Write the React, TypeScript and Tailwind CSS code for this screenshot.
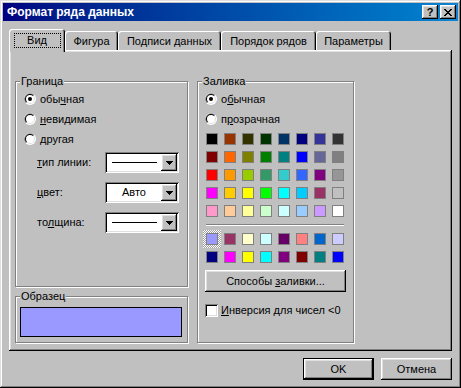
import React from 'react';

const RAISED =
  'shadow-[inset_-1px_-1px_0_#000,inset_1px_1px_0_#fff,inset_-2px_-2px_0_#808080,inset_2px_2px_0_#dfdfdf]';
const SUNKEN =
  'shadow-[inset_1px_1px_0_#808080,inset_-1px_-1px_0_#fff,inset_2px_2px_0_#000,inset_-2px_-2px_0_#dfdfdf]';

const PALETTE: string[][] = [
  ['#000000', '#993300', '#333300', '#003300', '#003366', '#000080', '#333399', '#333333'],
  ['#800000', '#ff6600', '#808000', '#008000', '#008080', '#0000ff', '#666699', '#808080'],
  ['#ff0000', '#ff9900', '#99cc00', '#339966', '#33cccc', '#3366ff', '#800080', '#969696'],
  ['#ff00ff', '#ffcc00', '#ffff00', '#00ff00', '#00ffff', '#00ccff', '#993366', '#c0c0c0'],
  ['#ff99cc', '#ffcc99', '#ffff99', '#ccffcc', '#ccffff', '#99ccff', '#cc99ff', '#ffffff'],
];

const EXTRA: string[][] = [
  ['#9999ff', '#993366', '#ffffcc', '#ccffff', '#660066', '#ff8080', '#0066cc', '#ccccff'],
  ['#000080', '#ff00ff', '#ffff00', '#00ffff', '#800080', '#800000', '#008080', '#0000ff'],
];

const Radio = ({ checked }: { checked?: boolean }) => (
  <svg width="12" height="12" viewBox="0 0 12 12" className="shrink-0">
    <circle cx="6" cy="6" r="6" fill="#fff" />
    <path d="M10.24 1.76 A6 6 0 0 0 1.76 10.24 Z" fill="#808080" />
    <circle cx="6" cy="6" r="5" fill="#dfdfdf" />
    <path d="M9.54 2.46 A5 5 0 0 0 2.46 9.54 Z" fill="#000" />
    <circle cx="6" cy="6" r="4" fill="#fff" />
    {checked && <circle cx="6" cy="6" r="2" fill="#000" />}
  </svg>
);

const RadioRow = ({ checked, children }: { checked?: boolean; children: React.ReactNode }) => (
  <div className="flex h-[12px] items-center gap-[4px]">
    <Radio checked={checked} />
    <span className="leading-[12px]">{children}</span>
  </div>
);

const Combo = ({ children }: { children: React.ReactNode }) => (
  <div className={`flex h-[21px] w-[74px] bg-white p-[2px] ${SUNKEN}`}>
    <div className="flex flex-1 items-center justify-center">{children}</div>
    <div className={`flex h-full w-[16px] items-center justify-center bg-[#c0c0c0] ${RAISED}`}>
      <svg width="7" height="4" viewBox="0 0 7 4" shapeRendering="crispEdges">
        <path d="M0 0h7v1h-1v1h-1v1h-1v1h-1v-1h-1v-1h-1v-1h-1z" fill="#000" />
      </svg>
    </div>
  </div>
);

const GroupBox = ({
  label,
  className,
  children,
}: {
  label: string;
  className: string;
  children?: React.ReactNode;
}) => (
  <div className={`relative border border-[#808080] shadow-[inset_1px_1px_0_#fff,1px_1px_0_#fff] ${className}`}>
    <span className="absolute -top-[7px] left-[4px] bg-[#c0c0c0] px-[1px] leading-[13px]">{label}</span>
    {children}
  </div>
);

const Swatch = ({ color, selected }: { color: string; selected?: boolean }) => (
  <div className="relative h-[12px] w-[12px]">
    {selected && (
      <div className="absolute -inset-[3px] bg-[repeating-conic-gradient(#fff_0_25%,#a0a0a0_0_50%)] bg-[length:2px_2px]" />
    )}
    <div className="relative h-full w-full border border-[#808080]" style={{ backgroundColor: color }} />
  </div>
);

const Tab = ({ label, width, active }: { label: string; width: string; active?: boolean }) =>
  active ? (
    <div
      className={`relative z-10 -mb-[2px] flex h-[23px] flex-col items-center rounded-t-[3px] bg-[#c0c0c0] pt-[4px] shadow-[inset_1px_1px_0_#fff,inset_-1px_0_0_#000,inset_-2px_0_0_#808080] ${width}`}
    >
      <span className="flex h-[15px] w-[47px] items-center justify-center border border-dotted border-black">
        {label}
      </span>
    </div>
  ) : (
    <div
      className={`flex h-[19px] items-center justify-center rounded-t-[3px] bg-[#c0c0c0] pt-[2px] shadow-[inset_1px_1px_0_#fff,inset_-1px_0_0_#000,inset_-2px_0_0_#808080] ${width}`}
    >
      {label}
    </div>
  );

const Button = ({ children, primary, className }: { children: React.ReactNode; primary?: boolean; className: string }) => (
  <div className={`${primary ? 'border border-black' : ''} ${className}`}>
    <div className={`flex h-full w-full items-center justify-center bg-[#c0c0c0] ${RAISED}`}>
      <span>{children}</span>
    </div>
  </div>
);

const App: React.FC = () => {
  return (
    <div
      className={`flex h-[388px] w-[461px] flex-col bg-[#c0c0c0] p-[3px] font-['Liberation_Sans',Arial,sans-serif] text-[11px] text-black shadow-[inset_-1px_-1px_0_#000,inset_1px_1px_0_#dfdfdf,inset_-2px_-2px_0_#808080,inset_2px_2px_0_#fff]`}
    >
      {/* title bar */}
      <div className="flex h-[18px] shrink-0 items-center justify-between bg-gradient-to-r from-[#000080] to-[#1084d0] pl-[4px] pr-[2px]">
        <span className="text-[12px] font-bold text-white">Формат ряда данных</span>
        <div className="flex gap-[2px]">
          <div className={`flex h-[14px] w-[16px] items-center justify-center bg-[#c0c0c0] text-[11px] font-bold leading-none ${RAISED}`}>
            ?
          </div>
          <div className={`flex h-[14px] w-[16px] items-center justify-center bg-[#c0c0c0] ${RAISED}`}>
            <svg width="8" height="7" viewBox="0 0 8 7" shapeRendering="crispEdges">
              <path
                d="M0 0h2v1h-2z M6 0h2v1h-2z M1 1h2v1h-2z M5 1h2v1h-2z M2 2h4v1h-4z M3 3h2v1h-2z M2 4h4v1h-4z M1 5h2v1h-2z M5 5h2v1h-2z M0 6h2v1h-2z M6 6h2v1h-2z"
                fill="#000"
              />
            </svg>
          </div>
        </div>
      </div>

      {/* tabs */}
      <div className="ml-[6px] mt-[8px] flex h-[21px] items-end">
        <Tab label="Вид" width="w-[56px]" active />
        <Tab label="Фигура" width="w-[53px]" />
        <Tab label="Подписи данных" width="w-[103px]" />
        <Tab label="Порядок рядов" width="w-[95px]" />
        <Tab label="Параметры" width="w-[75px]" />
      </div>

      {/* panel */}
      <div className={`ml-[6px] flex h-[301px] w-[443px] gap-[9px] pl-[6px] pt-[31px] ${RAISED}`}>
        <div className="flex flex-col gap-[9px]">
          <GroupBox label="Граница" className="h-[206px] w-[173px] pl-[8px] pt-[11px]">
            <div className="flex flex-col gap-[8px]">
              <RadioRow checked>
                обы<u>ч</u>ная
              </RadioRow>
              <RadioRow>
                <u>н</u>евидимая
              </RadioRow>
              <RadioRow>другая</RadioRow>
            </div>
            <div className="ml-[13px] mt-[7px] flex flex-col gap-[9px]">
              <div className="flex items-center">
                <span className="w-[68px]">
                  <u>т</u>ип линии:
                </span>
                <Combo>
                  <div className="h-px w-[45px] bg-black" />
                </Combo>
              </div>
              <div className="flex items-center">
                <span className="w-[68px]">
                  <u>ц</u>вет:
                </span>
                <Combo>
                  <span>Авто</span>
                </Combo>
              </div>
              <div className="flex items-center">
                <span className="w-[68px]">
                  то<u>л</u>щина:
                </span>
                <Combo>
                  <div className="h-px w-[45px] bg-black" />
                </Combo>
              </div>
            </div>
          </GroupBox>

          <GroupBox label="Образец" className="h-[47px] w-[173px] pl-[4px] pt-[10px]">
            <div className="h-[30px] w-[162px] border border-black bg-[#9999ff]" />
          </GroupBox>
        </div>

        <GroupBox label="Заливка" className="h-[262px] w-[157px] pl-[7px] pt-[11px]">
          <div className="flex flex-col gap-[8px]">
            <RadioRow checked>
              о<u>б</u>ычная
            </RadioRow>
            <RadioRow>
              п<u>р</u>озрачная
            </RadioRow>
          </div>
          <div className="ml-[1px] mt-[8px] grid w-[138px] grid-cols-8 gap-[6px]">
            {PALETTE.flat().map((c, i) => (
              <Swatch key={i} color={c} />
            ))}
          </div>
          <div className="ml-[1px] mt-[7px] h-[2px] w-[138px] border-t border-[#808080] bg-white" />
          <div className="ml-[1px] mt-[7px] grid w-[138px] grid-cols-8 gap-[6px]">
            {EXTRA.flat().map((c, i) => (
              <Swatch key={i} color={c} selected={i === 0} />
            ))}
          </div>
          <Button className="mt-[7px] h-[22px] w-[141px]">
            Способы <u>з</u>аливки...
          </Button>
          <div className="mt-[10px] flex items-center gap-[3px]">
            <div className={`h-[13px] w-[13px] bg-white ${SUNKEN}`} />
            <span>
              <u>И</u>нверсия для чисел &lt;0
            </span>
          </div>
        </GroupBox>
      </div>

      {/* buttons */}
      <div className="mt-[7px] flex justify-end gap-[7px] pr-[6px]">
        <Button primary className="h-[22px] w-[71px]">
          OK
        </Button>
        <Button className="h-[22px] w-[71px]">Отмена</Button>
      </div>
    </div>
  );
};

export default App;
